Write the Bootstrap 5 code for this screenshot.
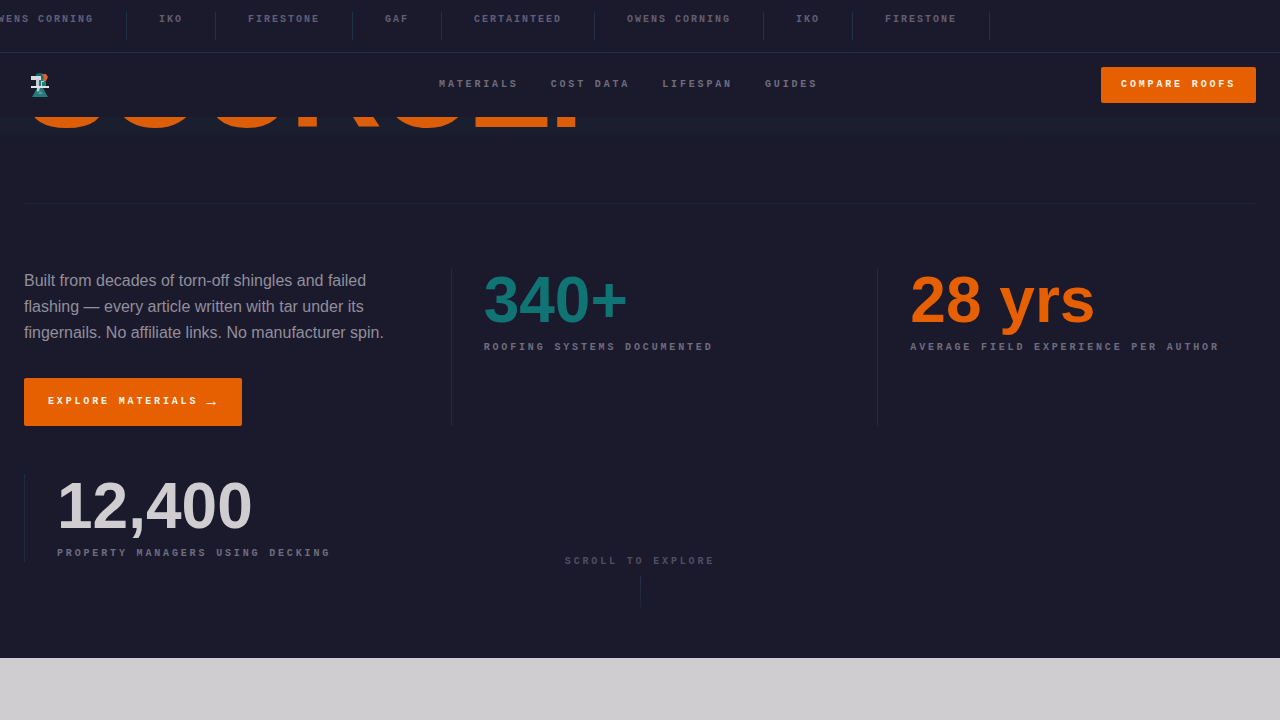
<!DOCTYPE html>
<html lang="en">
<head>
<meta charset="utf-8">
<meta name="viewport" content="width=device-width, initial-scale=1">
<title>Decking</title>
<link rel="stylesheet" href="https://cdn.jsdelivr.net/npm/bootstrap@5.3.0/dist/css/bootstrap.min.css">
<style>
  :root { --ink: #1b1a2d; --rule: #1f3142; --orange: #e65f00; --teal: #107475; --paper: #d0cdd0; --muted: #6f6c7e; }
  body { font-family: "Liberation Sans", Arial, sans-serif; background: var(--paper); color: var(--paper); }
  .mono { font-family: "Liberation Mono", "Courier New", monospace; font-weight: 700; font-size: 10px; line-height: 16px; letter-spacing: .284em; text-transform: uppercase; }
  .site-top, .hero { background: var(--ink); }
  .ticker { padding: 12px 0; border-bottom: 1px solid var(--rule); }
  .ticker-track { transform: translateX(-42px); }
  .ticker-track li { flex: none; height: 28px; padding: 0 32px; border-right: 1px solid var(--rule); letter-spacing: .2em; color: #625f74; }
  .site-nav { min-height: 64px; }
  .brand { min-width: 132px; }
  .site-nav a.mono { color: var(--muted); }
  .cta { background: var(--orange); color: #fff4e6; border: 0; border-radius: 2px; }
  .cta:hover { background: #c95300; color: #fff; }
  .cta-sm { min-height: 36px; padding: 0 20px; }
  .cta-lg { min-height: 48px; padding: 0 24px; }
  .cta-arrow { font-size: 16px; letter-spacing: 0; padding-right: 2px; }
  .hero { padding: 27px 0 96px; }
  .hero-title { background: linear-gradient(#1a1f2f 0 86%, var(--ink)); padding: 0 24px; margin-bottom: 64px; font-size: 128px; line-height: 112px; font-weight: 700; letter-spacing: -.03em; color: #dc5e08; }
  .hero-grid { display: grid; grid-template-columns: repeat(3, minmax(0, 1fr)); gap: 48px; border-top: 1px solid #1c2435; padding-top: 64px; }
  .lede { font-size: 16px; line-height: 26px; color: #918f9b; margin-bottom: 32px; }
  .stat { border-left: 1px solid #1f2a3d; padding-left: 32px; }
  .stat dd { font-size: 64px; line-height: 64px; font-weight: 700; margin: 0 0 8px; }
  .stat dt { color: var(--muted); white-space: nowrap; }
  .scroll-cue { bottom: 50px; gap: 6px; color: #504e61; }
  .scroll-cue i { width: 1px; height: 32px; background: linear-gradient(#263247, #1e2134); }
  .next-section { min-height: 62px; }
  @media (max-width: 991px) { .hero-grid { grid-template-columns: minmax(0, 1fr); } .stat dt { white-space: normal; } }
</style>
</head>
<body>
<header class="site-top fixed-top">
  <div class="ticker overflow-hidden">
    <ul class="ticker-track list-unstyled d-flex mb-0">
      <li class="mono">Owens Corning</li>
      <li class="mono">IKO</li>
      <li class="mono">Firestone</li>
      <li class="mono">GAF</li>
      <li class="mono">CertainTeed</li>
      <li class="mono">Owens Corning</li>
      <li class="mono">IKO</li>
      <li class="mono">Firestone</li>
    </ul>
  </div>
  <nav class="site-nav d-flex align-items-center justify-content-between px-4" aria-label="Main">
    <a class="brand" href="#" aria-label="Decking">
      <svg class="d-block" width="32" height="32" viewBox="0 0 32 32" aria-hidden="true">
        <path d="M12 5l4-1 4 1v4h-8z" fill="#19696d"/>
        <path d="M12 9h10v9H12z" fill="#28797a"/>
        <path d="M18 5h4l2 3-2 4h-3l1-3z" fill="#dc6428"/>
        <path d="M7 7h10v4H7z" fill="#d8dadd"/>
        <path d="M12 10h3v8h-3zM17 12h3v1h-2v4h-1z" fill="#bfd0d3"/>
        <path d="M7 17h18v2H7z" fill="#dde2e4"/>
        <path d="M13 19h6l5 9H8z" fill="#28797a"/>
        <path d="M13 19h3l-1 3-2 1z" fill="#bfd0d3"/>
        <path d="M16 22l3 3h-5z" fill="#5ca09e"/>
      </svg>
    </a>
    <div class="d-none d-md-flex gap-4">
      <a class="mono text-decoration-none me-2" href="#materials">Materials</a>
      <a class="mono text-decoration-none me-2" href="#cost">Cost Data</a>
      <a class="mono text-decoration-none me-2" href="#lifespan">Lifespan</a>
      <a class="mono text-decoration-none" href="#guides">Guides</a>
    </div>
    <button type="button" class="cta cta-sm mono">Compare Roofs</button>
  </nav>
</header>

<main>
  <section class="hero position-relative">
    <h1 class="hero-title">SOURCE.</h1>
    <div class="px-4">
      <div class="hero-grid">
        <div>
          <p class="lede">Built from decades of torn-off shingles and failed flashing — every article written with tar under its fingernails. No affiliate links. No manufacturer spin.</p>
          <button type="button" class="cta cta-lg mono d-inline-flex align-items-center gap-2">Explore Materials <span class="cta-arrow">→</span></button>
        </div>
        <dl class="stat d-flex flex-column-reverse justify-content-end mb-0">
          <dt class="mono">Roofing systems documented</dt>
          <dd style="color: var(--teal)">340+</dd>
        </dl>
        <dl class="stat d-flex flex-column-reverse justify-content-end mb-0">
          <dt class="mono">Average field experience per author</dt>
          <dd style="color: var(--orange)">28 yrs</dd>
        </dl>
        <dl class="stat d-flex flex-column-reverse justify-content-end mb-0">
          <dt class="mono">Property managers using Decking</dt>
          <dd>12,400</dd>
        </dl>
      </div>
    </div>
    <div class="scroll-cue mono position-absolute start-0 end-0 d-flex flex-column align-items-center">
      <span>Scroll to explore</span>
      <i></i>
    </div>
  </section>
  <section class="next-section"></section>
</main>
<script src="https://cdn.jsdelivr.net/npm/bootstrap@5.3.0/dist/js/bootstrap.bundle.min.js"></script>
</body>
</html>
